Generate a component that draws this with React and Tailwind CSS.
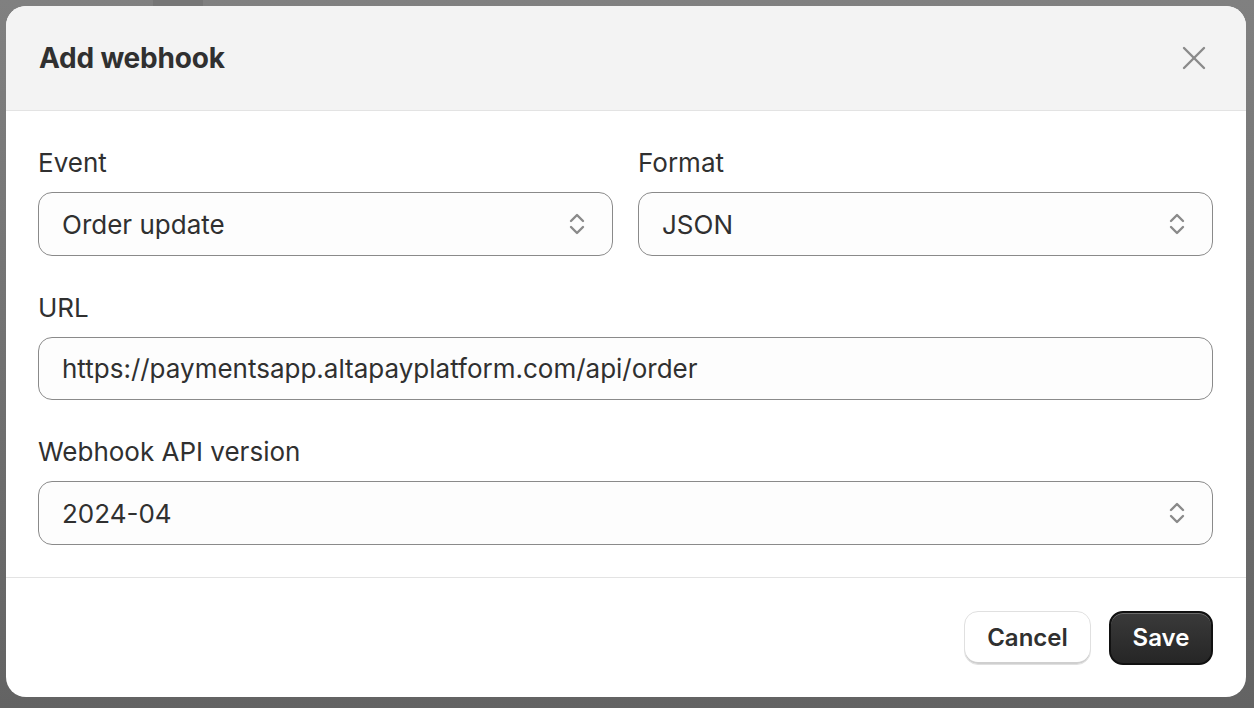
import React from "react";

function Chevrons() {
  return (
    <svg width="18" height="26" viewBox="0 0 18 26" fill="none" stroke="#8a8a8a" strokeWidth="2.4" strokeLinecap="round" strokeLinejoin="round">
      <polyline points="3,10 9,4 15,10" />
      <polyline points="3,16 9,22 15,16" />
    </svg>
  );
}

function Field({ label, children }) {
  return (
    <div className="flex flex-col">
      <div className="text-[26px] leading-[32px] text-[#303030] mb-[13px]">{label}</div>
      {children}
    </div>
  );
}

function Select({ value }) {
  return (
    <div className="h-[64px] rounded-[14px] border border-[#8a8a8a] bg-[#fdfdfd] flex items-center justify-between pl-[23px] pr-[26px]">
      <span className="text-[26px] text-[#303030]">{value}</span>
      <Chevrons />
    </div>
  );
}

export default function App() {
  return (
    <div
      className="w-[1254px] h-[708px] pt-[6px] pl-[6px] bg-gradient-to-b from-[#808080] to-[#636363] relative overflow-hidden"
      style={{ fontFamily: "Inter, 'Liberation Sans', sans-serif" }}
    >
      <div className="absolute top-0 left-[153px] w-[50px] h-[6px] bg-[#767676]" />
      <div className="w-[1240px] h-[691px] rounded-[20px] bg-white overflow-hidden flex flex-col relative">
        <div className="h-[105px] bg-[#f3f3f3] border-b border-[#e3e3e3] flex items-center justify-between pl-[33px] pr-[40px] shrink-0">
          <h1 className="text-[28px] font-bold text-[#303030] tracking-[-0.2px]">Add webhook</h1>
          <svg width="24" height="24" viewBox="0 0 24 24" fill="none" stroke="#8a8a8a" strokeWidth="2.4" strokeLinecap="round">
            <line x1="2" y1="2" x2="22" y2="22" />
            <line x1="22" y1="2" x2="2" y2="22" />
          </svg>
        </div>
        <div className="flex flex-col gap-[36px] pt-[36px] pb-[32px] pl-[32px] pr-[33px] border-b border-[#e3e3e3]">
          <div className="grid grid-cols-2 gap-[25px]">
            <Field label="Event">
              <Select value="Order update" />
            </Field>
            <Field label="Format">
              <Select value="JSON" />
            </Field>
          </div>
          <Field label="URL">
            <div className="h-[63px] rounded-[14px] border border-[#8a8a8a] bg-[#fdfdfd] flex items-center pl-[23px]">
              <span className="text-[26px] text-[#303030]">https://paymentsapp.altapayplatform.com/api/order</span>
            </div>
          </Field>
          <Field label="Webhook API version">
            <Select value="2024-04" />
          </Field>
        </div>
        <div className="flex-1 flex items-start justify-end gap-[18px] pt-[33px] pr-[33px]">
          <button className="w-[127px] h-[54px] rounded-[14px] bg-white border border-[#e0e0e0] shadow-[inset_0_-2px_0_#cfcfcf] text-[24px] font-semibold text-[#303030]">
            Cancel
          </button>
          <button className="w-[104px] h-[54px] rounded-[14px] bg-gradient-to-b from-[#3a3a3a] to-[#262626] border-2 border-[#111] shadow-[inset_0_1px_0_rgba(255,255,255,0.25)] text-[24px] font-semibold text-white">
            Save
          </button>
        </div>
      </div>
    </div>
  );
}
